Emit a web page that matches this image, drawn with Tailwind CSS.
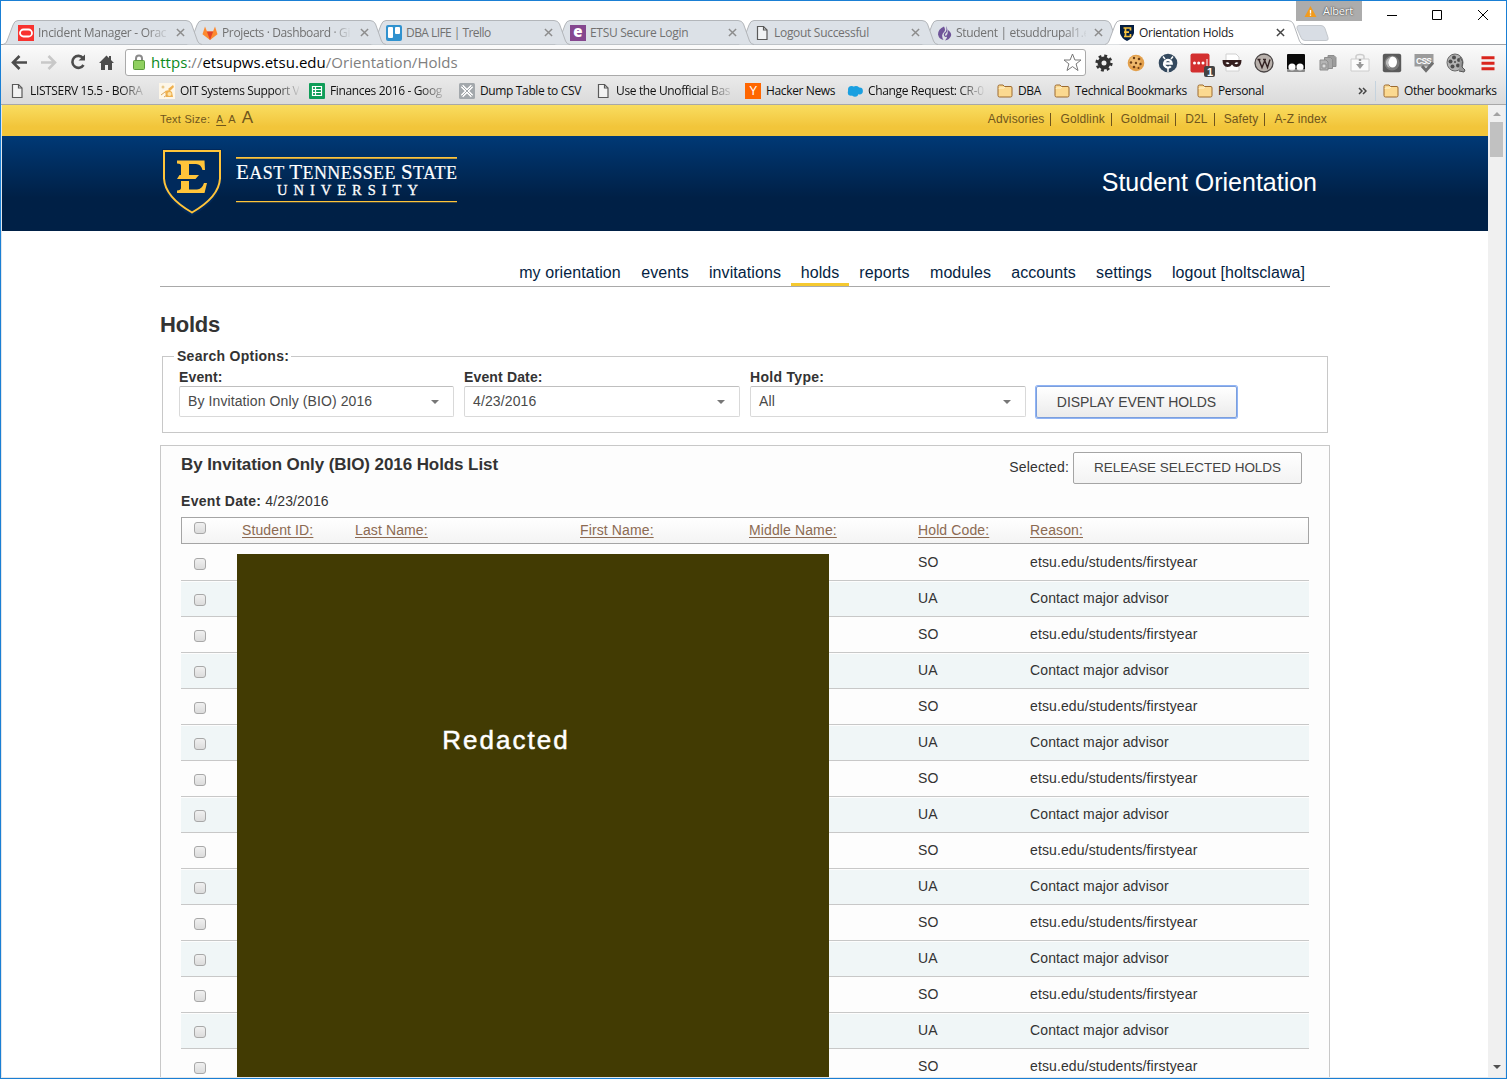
<!DOCTYPE html>
<html lang="en">
<head>
<meta charset="utf-8">
<title>Orientation Holds</title>
<script src="https://cdn.jsdelivr.net/npm/@tailwindcss/browser@4"></script>
</head>
<body class="overflow-hidden bg-white">
<svg class="hidden">
  <symbol id="page" viewBox="0 0 16 16"><path d="M3.500 1.500h6l3.500 3.500v9.500h-9.500z" fill="#fff" fill-opacity=".6" stroke="#5a5a5a" stroke-width="1.200"/><path d="M9.500 1.500v3.500h3.500" fill="none" stroke="#5a5a5a" stroke-width="1.200"/></symbol>
  <symbol id="folder" viewBox="0 0 16 16"><path d="M1 12.500V3.500Q1 2 2.500 2H6l1.500 1.500h6.500Q15 3.500 15 5v7.500Q15 14 13.500 14h-11Q1 14 1 12.500z" fill="#fbd990" stroke="#9c6a30" stroke-width="1"/><path d="M2 6q0-1 1-1h4l1-1" fill="none" stroke="#fff3d0"/></symbol>
  <symbol id="x" viewBox="0 0 10 10"><path d="M1 1l8 8M9 1l-8 8" fill="none" stroke="currentColor" stroke-width="1.600"/></symbol>
  <symbol id="tab" viewBox="0 0 200 25"><path d="M0 24.500Q3 24 4 21L10 5Q11.500.500 15 .500H183Q187 .500 188.500 4L194.500 21Q196 24.500 199 24.500" fill="currentColor" stroke="#b3b6ba"/></symbol>
</svg>

<div class="relative flex h-[1079px] w-[1507px] flex-col overflow-hidden border border-[#1a7fd4] bg-white font-['Open_Sans',sans-serif] text-[12px]">

  <!-- tab strip -->
  <header class="relative h-[44px] shrink-0">
    <div class="absolute top-0 left-[1295px] flex h-5 w-[66px] items-center gap-[6px] bg-[#acacac] pl-2 text-[11px] tracking-[-0.2px] text-white [text-shadow:0_0_2px_#444,0_0_1px_#444]">
      <svg class="size-[13px]" viewBox="0 0 13 13"><path d="M6.500 1L12.500 12H.500z" fill="#f29b1d"/><path d="M6.500 5v3.500M6.500 9.500v1.200" stroke="#fff" stroke-width="1.300"/></svg>Albert
    </div>
    <svg class="absolute top-[8px] left-[1385px] h-3 w-[106px]" viewBox="0 0 106 12" fill="none" stroke="#000"><path d="M1 6.500h10"/><path d="M46.500 1.500h9v9h-9z"/><path d="M92 1l10 10M102 1l-10 10"/></svg>
    <div class="absolute bottom-0 h-px w-full bg-[#9fa2a6]"></div>
    <nav class="absolute top-[19px] left-[2px] flex h-[25px] text-[#717171]">
      <div class="relative z-[7] mr-[-16px] flex w-[200px] items-center pr-[18px] pl-[15px]">
        <svg class="absolute inset-0 size-full text-[#dce1e7]"><use href="#tab"/></svg>
        <svg class="relative size-4 shrink-0" viewBox="0 0 16 16"><path d="M0 0h16v16H0z" fill="#f8322f"/><rect x="2" y="4.500" width="12" height="7" rx="3.500" fill="none" stroke="#fff" stroke-width="1.800"/></svg>
        <span class="relative ml-1 w-[130px] whitespace-nowrap tracking-[-0.28px] [mask-image:linear-gradient(90deg,#000_108px,transparent_132px)]">Incident Manager - Orac</span>
        <svg class="relative ml-auto size-[9px] text-[#8c8c8c]"><use href="#x"/></svg>
      </div>
      <div class="relative z-[6] mr-[-16px] flex w-[200px] items-center pr-[18px] pl-[15px]">
        <svg class="absolute inset-0 size-full text-[#dce1e7]"><use href="#tab"/></svg>
        <svg class="relative size-4 shrink-0" viewBox="0 0 16 16"><path d="M8 15L.500 9.200 3 1.500 5 6.500h6l2-5 2.500 7.700z" fill="#fc8a30"/><path d="M8 15L4.800 6.500h6.400z" fill="#e24329"/></svg>
        <span class="relative ml-1 w-[130px] whitespace-nowrap tracking-[-0.37px] [mask-image:linear-gradient(90deg,#000_108px,transparent_130px)]">Projects · Dashboard · Gi</span>
        <svg class="relative ml-auto size-[9px] text-[#8c8c8c]"><use href="#x"/></svg>
      </div>
      <div class="relative z-[5] mr-[-16px] flex w-[200px] items-center pr-[18px] pl-[15px]">
        <svg class="absolute inset-0 size-full text-[#dce1e7]"><use href="#tab"/></svg>
        <svg class="relative size-4 shrink-0" viewBox="0 0 16 16"><rect width="16" height="16" rx="2" fill="#3092cf"/><rect x="2" y="2" width="5" height="11" rx="1" fill="#fff"/><rect x="9" y="2" width="5" height="7" rx="1" fill="#fff"/></svg>
        <span class="relative ml-1 w-[130px] whitespace-nowrap tracking-[-0.55px]">DBA LIFE | Trello</span>
        <svg class="relative ml-auto size-[9px] text-[#8c8c8c]"><use href="#x"/></svg>
      </div>
      <div class="relative z-[4] mr-[-16px] flex w-[200px] items-center pr-[18px] pl-[15px]">
        <svg class="absolute inset-0 size-full text-[#dce1e7]"><use href="#tab"/></svg>
        <span class="relative flex size-4 shrink-0 items-center justify-center bg-[#85478f] pb-[3px] text-[15px] leading-none font-extrabold text-white">e</span>
        <span class="relative ml-1 w-[130px] whitespace-nowrap tracking-[-0.3px]">ETSU Secure Login</span>
        <svg class="relative ml-auto size-[9px] text-[#8c8c8c]"><use href="#x"/></svg>
      </div>
      <div class="relative z-[3] mr-[-17px] flex w-[200px] items-center pr-[19px] pl-[15px]">
        <svg class="absolute inset-0 size-full text-[#dce1e7]"><use href="#tab"/></svg>
        <svg class="relative size-4 shrink-0"><use href="#page"/></svg>
        <span class="relative ml-1 w-[130px] whitespace-nowrap tracking-[-0.3px]">Logout Successful</span>
        <svg class="relative ml-auto size-[9px] text-[#8c8c8c]"><use href="#x"/></svg>
      </div>
      <div class="relative z-[2] mr-[-17px] flex w-[200px] items-center pr-[19px] pl-[15px]">
        <svg class="absolute inset-0 size-full text-[#dce1e7]"><use href="#tab"/></svg>
        <svg class="relative size-4 shrink-0" viewBox="0 0 16 16"><path d="M7 1.500Q1 4 1 9.500Q2 14 6.500 15Q3.500 10 7 7Q9 5 7 1.500z" fill="#6f5499"/><path d="M9 1Q12 6 9 8Q7 10 9 11Q11 9 11 5Q15 8 14 11Q12 15 8 15.500Q12 11 8 12Q5 9 9 6.500Q10 4 9 1z" fill="#6f5499"/></svg>
        <span class="relative ml-[3px] w-[130px] whitespace-nowrap tracking-[-0.32px] [mask-image:linear-gradient(90deg,#000_108px,transparent_132px)]">Student | etsuddrupal1.e</span>
        <svg class="relative ml-auto size-[9px] text-[#8c8c8c]"><use href="#x"/></svg>
      </div>
      <div class="relative z-[8] flex w-[200px] items-center pr-[20px] pl-[14px] text-[#222]">
        <svg class="absolute inset-0 size-full text-white"><use href="#tab"/></svg>
        <svg class="relative size-4 shrink-0" viewBox="0 0 16 16"><path d="M1 0h14v8Q14 13 8 16Q2 13 1 8z" fill="#041e42"/><path d="M4.500 3h7v2.500M5 11.500h6.500V9M6.500 3v8.500M5 7.200h5" fill="none" stroke="#f5c13c" stroke-width="1.700"/></svg>
        <span class="relative ml-1 w-[126px] whitespace-nowrap tracking-[-0.3px]">Orientation Holds</span>
        <svg class="relative ml-auto size-[9px] text-[#444]"><use href="#x"/></svg>
      </div>
      <svg class="z-[9] mt-[5px] ml-[-9px] h-4 w-[34px]" viewBox="0 0 34 16"><path d="M3 .500h22q3 0 4 3l3 9q1 3-2 3H9q-3 0-4-3L1 3.500q-.500-3 2-3z" fill="#d8dde4" stroke="#c3c7cc"/></svg>
    </nav>
  </header>

  <!-- toolbar -->
  <div class="flex h-[60px] shrink-0 flex-col bg-linear-to-b from-[#fbfbfb] to-[#dadada]">
    <div class="flex h-[34px] items-center">
      <svg class="ml-[10px] h-5 w-[105px] shrink-0" viewBox="0 0 105 20" fill="none" stroke="#4c4c4c" stroke-width="2.600"><path d="M2 10.500h14M8.500 4l-6.500 6.500 6.500 6.500"/><path stroke="#c8c8c8" d="M30 10.500h14M37.500 4l6.500 6.500-6.500 6.500"/><path d="M72 6A6 6 0 1 0 72.500 13"/><path d="M67.500 8.500h6.500V2.500z" fill="#4c4c4c" stroke="none"/><path d="M88 11L95.500 3.500 98 6V4h2v4l3 3h-2v7h-4v-5h-3v5h-4v-7z" fill="#4c4c4c" stroke="none"/></svg>
      <div class="ml-[9px] flex h-[27px] w-[961px] shrink-0 items-center rounded-[3px] border border-[#aaa] bg-white pr-[3px] pl-[7px] text-[15px] text-[#808080]">
        <svg class="h-4 w-3 shrink-0" viewBox="0 0 12 16"><path d="M3 7V4.500a3 3 0 0 1 6 0V7" fill="none" stroke="#8b8b8b" stroke-width="2"/><rect x=".5" y="6.500" width="11" height="9" rx="1" fill="#8fd05f" stroke="#5b9b3b"/></svg>
        <span class="ml-[6px] whitespace-nowrap tracking-[0.03px]"><span class="text-[#0b8a1c]">https</span>://<span class="text-black">etsupws.etsu.edu</span>/Orientation/Holds</span>
        <svg class="ml-auto size-[19px]" viewBox="0 0 19 19"><path d="M9.500 1l2.400 6h6.100l-4.900 3.900 1.900 6.600-5.500-3.900-5.500 3.900 1.900-6.600L1 7h6.100z" fill="none" stroke="#777"/></svg>
      </div>
      <div class="mt-px ml-[2px] flex shrink-0 [&>*]:mx-[6px] [&>*]:size-5">
        <svg viewBox="0 0 20 20"><circle cx="10" cy="10" r="4.500" fill="none" stroke="#333" stroke-width="4"/><circle cx="10" cy="10" r="7.300" fill="none" stroke="#333" stroke-width="2.600" stroke-dasharray="2.900 2.833"/></svg>
        <svg viewBox="0 0 20 20"><circle cx="10" cy="10" r="8.300" fill="#e3a04c"/><circle cx="9" cy="8.500" r="5.500" fill="#efb96c"/><g fill="#6c3d14"><circle cx="8" cy="5" r="1.200"/><circle cx="13" cy="6" r="1.300"/><circle cx="5" cy="9.500" r="1.200"/><circle cx="10" cy="10" r="1.200"/><circle cx="14.500" cy="11" r="1.200"/><circle cx="8" cy="14" r="1.300"/><circle cx="12.500" cy="15" r="1"/></g></svg>
        <svg viewBox="0 0 20 20"><circle cx="10" cy="10" r="9.300" fill="#34495e"/><path d="M6.500 10.500h7.200A3.800 3.800 0 1 0 12.800 13.200" fill="none" stroke="#fff" stroke-width="2.300"/><path d="M5 3.500l2 2.500M15 3.500l-2 2.500M10 15v4" stroke="#fff" stroke-width="1.500"/></svg>
        <svg class="overflow-visible" viewBox="0 0 20 20"><rect x=".5" y=".5" width="19" height="19" rx="2" fill="#d32f2f"/><g fill="#fff"><circle cx="4.500" cy="10" r="1.500"/><circle cx="8.700" cy="10" r="1.500"/><circle cx="13" cy="10" r="1.500"/><path d="M16.500 6h1v8h-1z"/></g><rect x="14" y="13" width="11" height="11" rx="2" fill="#444"/><text x="17" y="22.500" font-family="Liberation Sans" font-weight="700" font-size="11" fill="#fff">1</text></svg>
        <svg viewBox="0 0 20 20"><path d="M4 1h10l3 3v14H4z" fill="#fff" stroke="#d0d0d0"/><path d="M.500 7h19q0 7-5 7-3 0-4.500-2.500Q8.500 14 5.500 14 .500 14 .500 7z" fill="#351f1f"/><path d="M3.500 10q2-1.500 4 .500-2 1.500-4-.500zM12.500 10.500q2-2 4-.500-2 2-4 .500z" fill="#fff"/></svg>
        <svg viewBox="0 0 20 20"><circle cx="10" cy="10" r="9" fill="#b9b1ac" stroke="#4b4646" stroke-width="1.300"/><path d="M3.500 6.500h3M9 6.500h3M5 7l3 7.500L11 7M10.500 7l3 7.500L16 6.500" fill="none" stroke="#322" stroke-width="1.400"/></svg>
        <svg viewBox="0 0 20 20"><rect x="1" y="1" width="18" height="18" rx="1" fill="#0a0a0a"/><circle cx="6" cy="14" r="3.600" fill="#fff"/><circle cx="14" cy="14" r="3.600" fill="#fff"/><path d="M1 16h18v3H1z" fill="#ddd" opacity=".6"/></svg>
        <svg viewBox="0 0 20 20" stroke="#8d8d8d"><path d="M10 2.500h6l2 2v9h-8z" fill="#9c9c9c"/><path d="M6.500 4.500h6l2 2v9h-8z" fill="#a8a8a8"/><path d="M2 7h6l2 2v8H2z" fill="#b4b4b4"/><path d="M4 11h4v4H4z" fill="#ddd"/></svg>
        <svg viewBox="0 0 20 20"><path d="M1 6h18v12H1z" fill="#fbfbfb" stroke="#ccc"/><path d="M6 6V3.500Q6 1.500 10 1.500t4 2V6" fill="none" stroke="#ccc" stroke-width="1.500"/><path d="M10 6v6" stroke="#999" stroke-width="2.400" stroke-dasharray="2 1"/><path d="M6 11h8l-4 5z" fill="#999"/></svg>
        <svg viewBox="0 0 20 20"><rect x=".8" y=".8" width="18.400" height="18.400" rx="2" fill="#5a5a5a"/><circle cx="10" cy="10" r="7.500" fill="#7b7b7b"/><ellipse cx="10.500" cy="9" rx="4.500" ry="5.500" fill="#fff"/><path d="M8 15q-4-5 1-11-6 2-5 7 1 3 4 4z" fill="#bbb"/></svg>
        <svg viewBox="0 0 20 20"><path d="M.500 1h19v10l-4 2.500H.500z" fill="#9b9b9b"/><text x="2" y="10.500" font-family="Liberation Sans" font-weight="700" font-size="8.500" fill="#fff" textLength="16">CSS</text><path d="M8 13l4 4.500 7-8" fill="none" stroke="#707070" stroke-width="3"/></svg>
        <svg viewBox="0 0 20 20"><ellipse cx="9" cy="9.500" rx="8" ry="8.500" fill="#b4b4b4" stroke="#666"/><g fill="#4d4d4d"><circle cx="8" cy="4.500" r="2"/><circle cx="13" cy="7" r="2"/><circle cx="4.500" cy="8.500" r="2"/><circle cx="12" cy="12.500" r="2"/><circle cx="6.500" cy="13.500" r="2"/><circle cx="9" cy="9" r="1"/></g><path d="M14 4q4 4 2 10l3 3-1 2-5-1" fill="#999" stroke="#555"/></svg>
        <svg viewBox="0 0 20 20"><path d="M3.500 4.700h13M3.500 10.200h13M3.500 15.700h13" stroke="#d9251d" stroke-width="3"/></svg>
      </div>
    </div>

    <!-- bookmarks bar -->
    <div class="flex h-6 items-center pl-[8px] leading-6 tracking-[-0.36px] whitespace-nowrap text-[#111]">
      <div class="flex w-[150px] items-center gap-[5px]"><svg class="size-4 shrink-0"><use href="#page"/></svg><span class="w-[118px] [mask-image:linear-gradient(90deg,#000_90px,transparent_118px)]">LISTSERV 15.5 - BORA</span></div>
      <div class="flex w-[150px] items-center gap-[5px]"><svg class="size-4 shrink-0" viewBox="0 0 16 16"><path d="M0 0h16v16H0z" fill="#fdf6e8"/><path d="M6 8l4-1 3 2 1 5H7zM9 6l5-4 1 2-4 4z" fill="#efb04e"/><circle cx="4" cy="4" r="1.500" fill="#e8c98c"/><circle cx="10.500" cy="11" r="2" fill="#fde3a8"/><path d="M2 12l4-3M5 14l3-2" stroke="#d9a65c"/></svg><span class="w-[119px] [mask-image:linear-gradient(90deg,#000_95px,transparent_121px)]">OIT Systems Support V</span></div>
      <div class="flex w-[150px] items-center gap-[5px]"><svg class="size-4 shrink-0" viewBox="0 0 16 16"><rect width="16" height="16" rx="1" fill="#0f9d58"/><path d="M3.500 3.500h9v9h-9zM3.500 6.500h9M3.500 9.500h9M6.500 3.500v9" fill="none" stroke="#fff" stroke-width="1.200"/></svg><span class="w-[118px] [mask-image:linear-gradient(90deg,#000_90px,transparent_118px)]">Finances 2016 - Goog</span></div>
      <div class="flex w-[138px] items-center gap-[5px]"><svg class="size-4 shrink-0" viewBox="0 0 16 16"><rect width="16" height="16" rx="1.500" fill="#a3a8ac"/><path d="M3 3l10 10M13 3L3 13" stroke="#fff" stroke-width="3.200"/><path d="M3 3l10 10M13 3L3 13" stroke="#a3a8ac" stroke-width="1"/></svg>Dump Table to CSV</div>
      <div class="flex w-[148px] items-center gap-[5px]"><svg class="ml-[-2px] size-4 shrink-0"><use href="#page"/></svg><span class="w-[118px] [mask-image:linear-gradient(90deg,#000_90px,transparent_118px)]">Use the Unofficial Bas</span></div>
      <div class="flex w-[102px] items-center gap-[5px]"><span class="flex size-4 shrink-0 items-center justify-center bg-[#ff6600] font-['Liberation_Sans'] text-[12px] text-white">Y</span>Hacker News</div>
      <div class="flex w-[149px] items-center gap-[5px]"><svg class="size-4 shrink-0" viewBox="0 0 16 16"><g fill="#1a9fe0"><circle cx="4.500" cy="6.500" r="3.500"/><circle cx="9" cy="6.500" r="3.500"/><circle cx="12.500" cy="8" r="3.400"/><circle cx="4" cy="9.500" r="3.200"/><circle cx="8" cy="10.500" r="3.200"/></g></svg><span class="w-[118px] [mask-image:linear-gradient(90deg,#000_90px,transparent_118px)]">Change Request: CR-0</span></div>
      <div class="flex w-[57px] items-center gap-[5px]"><svg class="ml-px size-4 shrink-0"><use href="#folder"/></svg>DBA</div>
      <div class="flex w-[143px] items-center gap-[5px]"><svg class="ml-px size-4 shrink-0"><use href="#folder"/></svg>Technical Bookmarks</div>
      <div class="flex w-[162px] items-center gap-[5px]"><svg class="ml-px size-4 shrink-0"><use href="#folder"/></svg>Personal</div>
      <svg class="h-[8px] w-[9px]" viewBox="0 0 9 8"><path d="M1 1l3 3-3 3M5 1l3 3-3 3" fill="none" stroke="#444" stroke-width="1.500"/></svg>
      <div class="ml-[8px] h-5 w-px bg-[#c5d3de]"></div>
      <div class="ml-[6px] flex items-center gap-[5px] tracking-[-0.4px]"><svg class="ml-px size-4 shrink-0"><use href="#folder"/></svg>Other bookmarks</div>
    </div>
    <div class="mt-auto h-px bg-[#a8a8a8]"></div>
  </div>

  <!-- page -->
  <div class="flex min-h-0 flex-1 border-x border-b border-[#e3e6ea] font-['Liberation_Sans',Arial,sans-serif] text-[14px] tracking-[0.12px] text-[#333]">
    <main class="w-[1486px] overflow-hidden">
      <div class="h-[31px] bg-linear-to-b from-[#f9dd5f] to-[#f2c53a] to-70% px-[158px] text-[12px] tracking-[0.13px] text-[#6f551c]">
        <div class="flex items-baseline justify-between">
          <div class="flex items-baseline text-[11px] leading-[26px] tracking-[0.25px]">Text Size:<span class="ml-[6px] text-[10px] underline underline-offset-2">A&nbsp;</span><span class="ml-[2px] text-[11px]">A</span><span class="ml-[6px] text-[17px]">A</span></div>
          <div class="flex pr-[3px] [&>span+span]:ml-[7px] [&>span]:border-[#6f551c] [&>span]:leading-[13px]">
            <span class="border-r pr-[6px]">Advisories</span><span class="border-r pr-[6px] pl-[2px]">Goldlink</span><span class="border-r pr-[6px] pl-[2px]">Goldmail</span><span class="border-r pr-[6px] pl-[2px]">D2L</span><span class="border-r pr-[6px] pl-[2px]">Safety</span><span class="pl-[2px]">A-Z index</span>
          </div>
        </div>
      </div>
      <div class="flex h-[95px] items-start justify-between bg-linear-to-b from-[#003976] to-[#002046] to-65% pr-[171px] pl-[158px]">
        <svg class="mt-3 h-[70px] w-[300px]" viewBox="0 0 300 70" fill="#fff" font-family="Liberation Serif, serif">
          <path d="M2 1h60v30Q61 52 32 68Q3 52 2 31z" fill="#00285a"/>
          <path d="M4 3h56v27.500Q59 49 32 64.500Q5 49 4 30.500z" fill="#002a5c" stroke="#ffc43a" stroke-width="2"/>
          <path d="M17 12.500H44.500L45 22H42.500Q41 16 36 16H29V27H39L35.500 31H29V41.500H37Q42 41 44 35H47L44.500 45H17V42.500Q21 42 21 40V33H29V31H17L19.500 27H21V17.500Q21 15.500 17 15.500z" fill="#ffc43a"/>
          <path d="M76 9h221v1.700H76zM76 53h221v1.200H76z" fill="#ffc43a"/>
          <text x="76" y="31" font-size="21" textLength="221" stroke="#fff" stroke-width=".2">E<tspan font-size="18">AST </tspan>T<tspan font-size="18">ENNESSEE </tspan>S<tspan font-size="18">TATE</tspan></text>
          <text x="117" y="47" font-size="14.500" textLength="141" stroke="#fff" stroke-width=".3">UNIVERSITY</text>
        </svg>
        <h2 class="mt-[31px] text-[25px] leading-[30px] tracking-[-0.01px] text-white">Student Orientation</h2>
      </div>

      <div class="ml-[158px] w-[1170px]">
        <nav class="mt-[24px] flex h-[32px] justify-end border-b border-[#a9a9a9] pr-[15px] text-center text-[16px] leading-[35px] tracking-[0.08px] text-[#041e42]">
          <a class="w-[122px]">my orientation</a><a class="w-[68px]">events</a><a class="w-[92px]">invitations</a><a class="w-[58px] border-b-[3px] border-[#f5c92f]">holds</a><a class="w-[71px]">reports</a><a class="w-[81px]">modules</a><a class="w-[85px]">accounts</a><a class="w-[76px]">settings</a><a class="w-[153px]">logout [holtsclawa]</a>
        </nav>
        <h1 class="mt-[23px] text-[22px] leading-[30px] font-bold tracking-[-0.2px]">Holds</h1>
        <section class="relative mx-[2px] mt-[16px] flex h-[77px] gap-[10px] border border-[#c8c8c8] pt-[11px] pl-4">
          <span class="absolute top-[-9px] left-[11px] bg-white pr-[2px] pl-[3px] leading-4 font-bold tracking-[0.27px]">Search Options:</span>
          <label class="w-[275px]"><b class="block leading-[18px] tracking-[0.15px]">Event:</b><span class="flex h-[31px] items-center justify-between rounded-xs border border-[#d9d9d9] border-t-[#bfbfbf] pr-[14px] pl-2 tracking-[0.1px] text-[#4a4a4a]">By Invitation Only (BIO) 2016<i class="border-x-4 border-t-4 border-x-transparent border-t-[#777]"></i></span></label>
          <label class="w-[276px]"><b class="block leading-[18px] tracking-[0.15px]">Event Date:</b><span class="flex h-[31px] items-center justify-between rounded-xs border border-[#d9d9d9] border-t-[#bfbfbf] pr-[14px] pl-2 text-[#4a4a4a]">4/23/2016<i class="border-x-4 border-t-4 border-x-transparent border-t-[#777]"></i></span></label>
          <label class="w-[276px]"><b class="block leading-[18px] tracking-[0.3px]">Hold Type:</b><span class="flex h-[31px] items-center justify-between rounded-xs border border-[#d9d9d9] border-t-[#bfbfbf] pr-[14px] pl-2 text-[#4a4a4a]">All<i class="border-x-4 border-t-4 border-x-transparent border-t-[#777]"></i></span></label>
          <button class="mt-[18px] h-8 w-[201px] rounded-xs border border-[#7c9fdc] bg-linear-to-b from-white to-[#ebebeb] tracking-[-0.05px] text-[#444] ring-1 ring-[#8fb3f5]">DISPLAY EVENT HOLDS</button>
        </section>

        <section class="relative mt-[12px] h-[700px] border border-[#c8c8c8] bg-[#fdfdfd] px-5">
          <div class="flex h-[46px] items-start justify-between pt-[6px] pr-[7px]">
            <h3 class="text-[17px] leading-[26px] font-bold tracking-[-0.08px]">By Invitation Only (BIO) 2016 Holds List</h3>
            <div class="flex items-center gap-1"><span class="pb-[2px] tracking-[0.15px]">Selected:</span><button class="h-8 w-[229px] rounded-xs border border-[#a5a5a5] bg-linear-to-b from-white to-[#f3f3f3] text-[13.5px] tracking-[-0.02px] text-[#444]">RELEASE SELECTED HOLDS</button></div>
          </div>
          <p class="h-[25px] leading-[18px]"><b class="tracking-[0.3px]">Event Date:</b> 4/23/2016</p>
          <div class="grid h-[27px] grid-cols-[60px_113px_225px_169px_169px_112px_1fr] border border-[#a5a5a5] bg-linear-to-b from-white to-[#f4f4f4] leading-[25px] text-[#8c6a52] underline underline-offset-2">
            <i class="mt-[4px] ml-[12px] size-3 rounded-[3px] border border-[#a8a8a8] bg-linear-to-b from-[#f0f0f0] to-[#dcdcdc]"></i><span>Student ID:</span><span>Last Name:</span><span>First Name:</span><span>Middle Name:</span><span>Hold Code:</span><span>Reason:</span>
          </div>
          <div id="rows" class="mt-px"></div>
          <div class="absolute top-[108px] left-[76px] flex h-[600px] w-[592px] justify-center bg-[#423b03] pt-[170px] pr-[54px] text-[26px] leading-8 tracking-[2px] text-white [-webkit-text-stroke:0.5px_#fff]">Redacted</div>
        </section>
      </div>
    </main>
    <div class="flex w-[17px] flex-col items-center justify-between bg-[#f0f0f0] pt-[7px] pb-[8px]">
      <div class="flex flex-col items-center"><i class="border-x-4 border-b-4 border-x-transparent border-b-[#a3a3a3]"></i><div class="mt-[6px] h-[35px] w-[13px] bg-[#c1c1c1]"></div></div>
      <i class="border-x-4 border-t-4 border-x-transparent border-t-[#505050]"></i>
    </div>
  </div>
</div>
<script>
  const kinds = [['SO', 'etsu.edu/students/firstyear', ''], ['UA', 'Contact major advisor', 'bg-[#f0f6f7]']];
  document.getElementById('rows').innerHTML = Array.from({ length: 15 }, (_, i) => {
    const [code, reason, tint] = kinds[i % 2];
    return `<div class="h-9 border-b border-[#c8c8c8] pt-px"><div class="grid h-[34px] grid-cols-[737px_112px_1fr] leading-[33px] ${tint}">
      <i class="mt-[12px] ml-[13px] size-3 rounded-[3px] border border-[#a8a8a8] bg-linear-to-b from-[#f0f0f0] to-[#dcdcdc]"></i><span>${code}</span><span>${reason}</span></div></div>`;
  }).join('');
</script>
</body>
</html>
